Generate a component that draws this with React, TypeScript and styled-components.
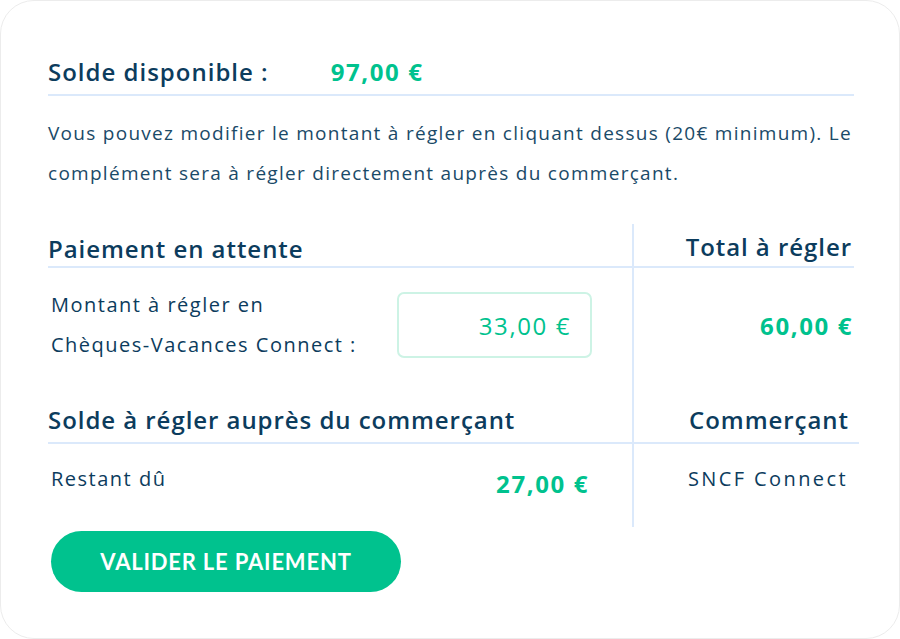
import React, { useState } from "react"
import styled, { createGlobalStyle } from "styled-components"

const GlobalStyle = createGlobalStyle`
  html, body {
    margin: 0;
    padding: 0;
    background: #ffffff;
  }
  * {
    box-sizing: border-box;
  }
`

export default function App() {
  const [amount] = useState("33,00 €")

  return (
    <>
      <GlobalStyle />
      <Card>
        <BalanceRow>
          <BalanceLabel>Solde disponible :</BalanceLabel>
          <Amount>97,00 €</Amount>
        </BalanceRow>
        <Info>
          Vous pouvez modifier le montant à régler en cliquant dessus (20€ minimum). Le
          complément sera à régler directement auprès du commerçant.
        </Info>
        <Table>
          <HeadCell height={44} pad={1}>Paiement en attente</HeadCell>
          <HeadCell height={44} pad={3} side="right">Total à régler</HeadCell>

          <BodyCell height={128} right={40}>
            <Label>
              Montant à régler en
              <br />
              Chèques-Vacances Connect :
            </Label>
            <AmountInput>{amount}</AmountInput>
          </BodyCell>
          <BodyCell height={128} side="right" right={2}>
            <Amount>60,00 €</Amount>
          </BodyCell>

          <HeadCell height={48} pad={6}>Solde à régler auprès du commerçant</HeadCell>
          <HeadCell height={48} pad={6} side="right" wide>Commerçant</HeadCell>

          <BodyCell height={83} top={15} right={44}>
            <Label>Restant dû</Label>
            <Amount shift={8}>27,00 €</Amount>
          </BodyCell>
          <BodyCell height={83} top={15} side="right" right={6}>
            <Label wide>SNCF Connect</Label>
          </BodyCell>
        </Table>
        <SubmitButton>Valider le paiement</SubmitButton>
      </Card>
    </>
  )
}

const Card = styled.div`
  width: 900px;
  height: 639px;
  border: 1px solid #ececec;
  border-radius: 34px;
  padding: 49px 0 0 47px;
  background: #ffffff;
  font-family: "Open Sans", "Liberation Sans", sans-serif;
  color: #0c3c5d;
  display: flex;
  flex-direction: column;
  align-items: flex-start;
`
const BalanceRow = styled.div`
  display: flex;
  flex-direction: row;
  align-items: center;
  gap: 62px;
  width: 806px;
  height: 46px;
  padding-bottom: 2px;
  border-bottom: 2px solid #dbe9fb;
`
const BalanceLabel = styled.div`
  font-size: 24px;
  font-weight: 600;
  letter-spacing: 1px;
`
const Amount = styled.div<{ shift?: number }>`
  font-size: 24px;
  font-weight: 700;
  letter-spacing: 1.6px;
  color: #00c28e;
  margin-top: ${(p) => p.shift || 0}px;
  margin-right: -1px;
`
const Info = styled.p`
  margin: 17px 0 0;
  width: 820px;
  font-size: 19px;
  line-height: 40px;
  letter-spacing: 1.28px;
  color: #1a4a68;
`
const Table = styled.div`
  margin-top: 31px;
  display: grid;
  grid-template-columns: 584px 222px;
  width: 810px;
`
const HeadCell = styled.div<{ height: number; pad: number; side?: "right"; wide?: boolean }>`
  height: ${(p) => p.height}px;
  display: flex;
  align-items: flex-end;
  justify-content: ${(p) => (p.side ? "flex-end" : "flex-start")};
  padding-bottom: ${(p) => p.pad}px;
  padding-right: ${(p) => (p.side ? (p.wide ? 10 : 2) : 0)}px;
  margin-right: ${(p) => (p.side && p.wide ? -5 : 0)}px;
  border-bottom: 2px solid #dbe9fb;
  border-left: ${(p) => (p.side ? "2px solid #dbe9fb" : "none")};
  font-size: 24px;
  font-weight: 600;
  letter-spacing: 0.95px;
  white-space: nowrap;
`
const BodyCell = styled.div<{ height: number; top?: number; side?: "right"; right: number }>`
  height: ${(p) => p.height}px;
  display: flex;
  flex-direction: row;
  align-items: ${(p) => (p.top ? "flex-start" : "center")};
  justify-content: ${(p) => (p.side ? "flex-end" : "space-between")};
  padding-top: ${(p) => p.top || 0}px;
  padding-left: 3px;
  padding-right: ${(p) => p.right}px;
  padding-bottom: ${(p) => (p.top ? 0 : 14)}px;
  border-left: ${(p) => (p.side ? "2px solid #dbe9fb" : "none")};
`
const Label = styled.div<{ wide?: boolean }>`
  font-size: 20px;
  line-height: 40px;
  letter-spacing: ${(p) => (p.wide ? 2.4 : 1.5)}px;
  color: #0c3c5d;
  white-space: nowrap;
`
const AmountInput = styled.div`
  width: 195px;
  height: 66px;
  border: 2px solid #cdf3e5;
  border-radius: 7px;
  display: flex;
  align-items: center;
  justify-content: flex-end;
  padding-right: 19px;
  font-size: 24px;
  color: #00c28e;
  letter-spacing: 1.6px;
`
const SubmitButton = styled.button`
  margin: 4px 0 0 3px;
  width: 350px;
  height: 61px;
  border: none;
  border-radius: 31px;
  background: #00c28e;
  color: #ffffff;
  font-family: "Lato", "Liberation Sans", sans-serif;
  font-weight: 700;
  font-size: 22px;
  letter-spacing: 0.8px;
  text-transform: uppercase;
  cursor: pointer;
`
